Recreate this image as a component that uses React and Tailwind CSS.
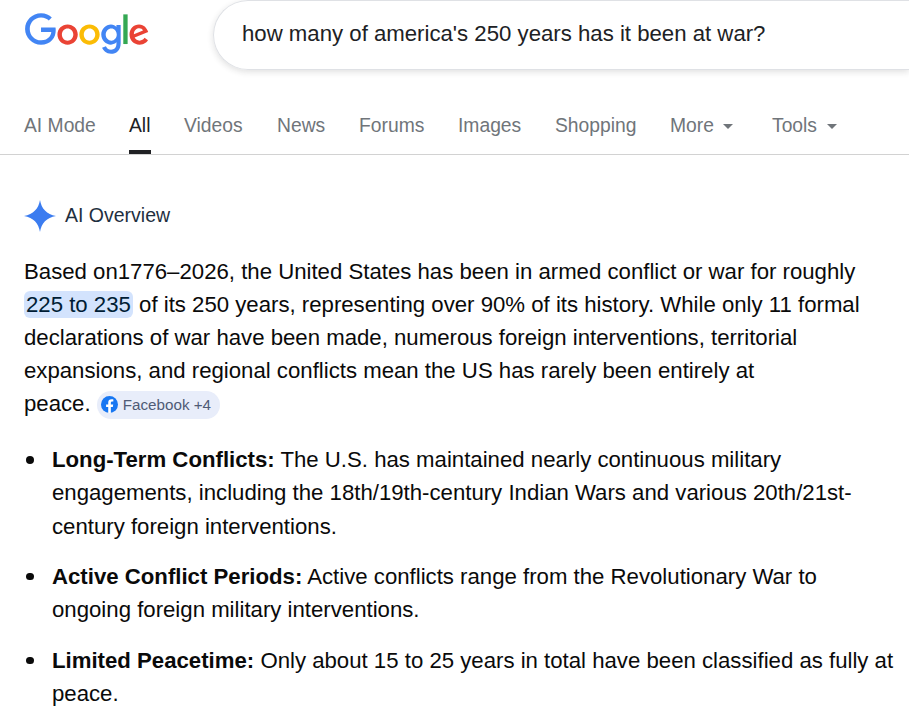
import React from 'react';

const GoogleLogo = () => (
  <svg viewBox="0 0 272 92" className="w-[126px] h-[42px]">
    <path fill="#EA4335" d="M115.75 47.18c0 12.77-9.99 22.18-22.25 22.18s-22.25-9.41-22.25-22.18C71.25 34.32 81.24 25 93.5 25s22.25 9.32 22.25 22.18zm-9.74 0c0-7.98-5.79-13.44-12.51-13.44S80.99 39.2 80.99 47.18c0 7.9 5.79 13.44 12.51 13.44s12.51-5.55 12.51-13.44z" />
    <path fill="#FBBC05" d="M163.75 47.18c0 12.77-9.99 22.18-22.25 22.18s-22.25-9.41-22.25-22.18c0-12.85 9.99-22.18 22.25-22.18s22.25 9.32 22.25 22.18zm-9.74 0c0-7.98-5.79-13.44-12.51-13.44s-12.51 5.46-12.51 13.44c0 7.9 5.79 13.44 12.51 13.44s12.51-5.55 12.51-13.44z" />
    <path fill="#4285F4" d="M209.75 26.34v39.82c0 16.38-9.66 23.07-21.08 23.07-10.75 0-17.22-7.19-19.66-13.07l8.48-3.53c1.51 3.61 5.21 7.87 11.17 7.87 7.31 0 11.84-4.51 11.84-13v-3.19h-.34c-2.18 2.69-6.38 5.04-11.68 5.04-11.09 0-21.25-9.66-21.25-22.09 0-12.52 10.16-22.26 21.25-22.26 5.29 0 9.49 2.35 11.68 4.96h.34v-3.61h9.25zm-8.56 20.92c0-7.81-5.21-13.52-11.84-13.52-6.72 0-12.35 5.71-12.35 13.52 0 7.73 5.63 13.36 12.35 13.36 6.63 0 11.84-5.63 11.84-13.36z" />
    <path fill="#34A853" d="M225 3v65h-9.5V3h9.5z" />
    <path fill="#EA4335" d="M262.02 54.48l7.56 5.04c-2.44 3.61-8.32 9.83-18.48 9.83-12.6 0-22.01-9.74-22.01-22.18 0-13.19 9.49-22.18 20.92-22.18 11.51 0 17.14 9.16 18.98 14.11l1.01 2.52-29.65 12.28c2.27 4.45 5.8 6.72 10.75 6.72 4.96 0 8.4-2.44 10.92-6.14zm-23.27-7.98l19.82-8.23c-1.09-2.77-4.37-4.7-8.23-4.7-4.95 0-11.84 4.37-11.59 12.93z" />
    <path fill="#4285F4" d="M35.29 41.41V32H67c.31 1.64.47 3.58.47 5.68 0 7.06-1.93 15.79-8.15 22.01-6.05 6.3-13.78 9.66-24.02 9.66C16.32 69.35.36 53.89.36 34.91.36 15.93 16.32.47 35.3.47c10.5 0 17.98 4.12 23.6 9.49l-6.64 6.64c-4.03-3.78-9.49-6.72-16.97-6.72-13.86 0-24.7 11.17-24.7 25.03 0 13.86 10.84 25.03 24.7 25.03 8.99 0 14.11-3.61 17.39-6.89 2.66-2.66 4.41-6.46 5.1-11.65l-22.49.01z" />
  </svg>
);

const Caret = () => (
  <span className="ml-[9.5px] mt-[1px] w-0 h-0 border-x-[5px] border-x-transparent border-t-[5px] border-t-[#70757a]" />
);

const tabs = [
  { label: 'AI Mode', w: 'w-[105px]' },
  { label: 'All', w: 'w-[55px]', active: true },
  { label: 'Videos', w: 'w-[93px]' },
  { label: 'News', w: 'w-[82px]' },
  { label: 'Forums', w: 'w-[99px]' },
  { label: 'Images', w: 'w-[97px]' },
  { label: 'Shopping', w: 'w-[115px]' },
  { label: 'More', w: 'w-[102px]', caret: true },
  { label: 'Tools', w: 'w-[70px]', caret: true },
];

const bullets = [
  {
    head: 'Long-Term Conflicts:',
    body: ' The U.S. has maintained nearly continuous military engagements, including the 18th/19th-century Indian Wars and various 20th/21st-century foreign interventions.',
  },
  {
    head: 'Active Conflict Periods:',
    body: ' Active conflicts range from the Revolutionary War to ongoing foreign military interventions.',
  },
  {
    head: 'Limited Peacetime:',
    body: ' Only about 15 to 25 years in total have been classified as fully at peace.',
  },
];

export default function App() {
  return (
    <div className="w-[909px] h-[711px] overflow-hidden bg-white font-['Liberation_Sans',Arial,sans-serif]">
      {/* Header */}
      <div className="flex h-[70px] pl-[24px]">
        <div className="w-[189px] pt-[13px]">
          <GoogleLogo />
        </div>
        <div className="flex-1 h-[70px] rounded-l-[35px] border border-[#dfe1e5] border-r-0 shadow-[0_2px_6px_rgba(32,33,36,0.14)] pl-[28px] pb-[2px] flex items-center text-[22.2px] text-[#202124]">
          how many of america's 250 years has it been at war?
        </div>
      </div>

      {/* Tabs */}
      <div className="flex h-[85px] pl-[24px] border-b border-[#d2d2d2]">
        {tabs.map((t) => (
          <div key={t.label} className={`${t.w} relative flex items-center pt-[28px] text-[19.3px] ${t.active ? 'text-[#202124]' : 'text-[#70757a]'}`}>
            <span className="relative h-[30px] leading-[30px] flex items-center">
              {t.label}
              {t.caret && <Caret />}
            </span>
            {t.active && <span className="absolute bottom-0 left-0 w-[22px] h-[4px] bg-[#202124]" />}
          </div>
        ))}
      </div>

      {/* AI Overview */}
      <div className="pl-[24px]">
        <div className="flex items-center gap-[9px] mt-[44px] h-[34px] text-[19.5px] text-[#1f2f40]">
          <svg viewBox="0 0 32 32" className="w-[32px] h-[34px]">
            <path fill="#3b7cf0" d="M16 0c1.4 8.6 6.6 14.4 16 16-9.4 1.6-14.6 7.4-16 16-1.4-8.6-6.6-14.4-16-16C9.4 14.4 14.6 8.6 16 0z" />
          </svg>
          AI Overview
        </div>

        <p className="mt-[22px] text-[22.2px] leading-[33px] text-[#0a0a0a] w-[850px]">
          Based on1776–2026, the United States has been in armed conflict or war for roughly{' '}
          <span className="bg-[#d3e3fd] text-[#001d35] rounded-[6px] px-[2px] py-[1px]">225 to 235</span> of its 250 years, representing over 90% of its history. While only 11 formal declarations of war have been made, numerous foreign interventions, territorial expansions, and regional conflicts mean the US has rarely been entirely at<br />
          peace.{' '}
          <span className="inline-flex items-center align-[-2px] h-[28px] w-[123px] pl-[4px] rounded-full bg-[#e8edfa] text-[15.2px] text-[#4f5b76] leading-none">
            <svg viewBox="0 0 24 24" className="w-[17px] h-[17px] mr-[5px]">
              <circle cx="12" cy="12" r="12" fill="#1877f2" />
              <path fill="#fff" d="M16.7 15.5l.5-3.5h-3.3V9.8c0-1 .5-1.9 2-1.9h1.5v-3s-1.4-.2-2.7-.2c-2.7 0-4.5 1.6-4.5 4.6V12h-3v3.5h3V24h3.7v-8.5h2.8z" />
            </svg>
            Facebook +4
          </span>
        </p>

        <ul className="mt-[23px] flex flex-col gap-[17px]">
          {bullets.map((b) => (
            <li key={b.head} className="flex text-[22.2px] leading-[33.33px] text-[#0a0a0a]">
              <span className="w-[28px] shrink-0 pl-[2px] pt-[13px]">
                <span className="block w-[7.5px] h-[7.5px] rounded-full bg-[#0a0a0a]" />
              </span>
              <div className="w-[843px] shrink-0">
                <b className="font-bold">{b.head}</b>
                {b.body}
              </div>
            </li>
          ))}
        </ul>
      </div>
    </div>
  );
}
